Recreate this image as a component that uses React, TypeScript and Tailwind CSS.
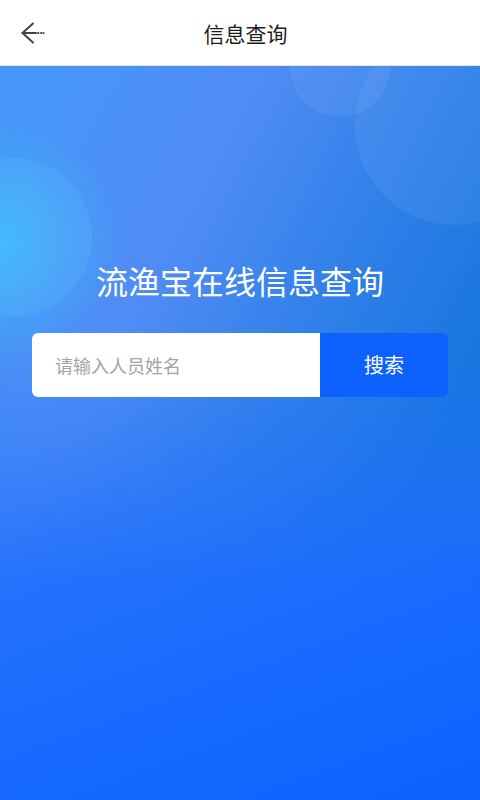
export default function App() {
  return (
    <div className="flex min-h-screen w-full flex-col font-['Noto_Sans_CJK_SC','Noto_Sans',sans-serif]">
      <header className="relative flex h-[66px] shrink-0 items-center justify-center border-b border-[#e6e6e6] bg-white">
        <button className="absolute left-[18px] top-[19px] flex h-[28px] w-[28px] items-center justify-center">
          <svg width="28" height="28" viewBox="0 0 28 28" fill="none" stroke="#444" strokeWidth="2" strokeLinecap="round" strokeLinejoin="round">
            <path d="M15 4.5 4.5 14 15 23.5" />
            <path d="M4.5 14H18" />
            <path d="M20 14h0.5M23 14h0.5M25.5 14h0.2" strokeWidth="1.8" />
          </svg>
        </button>
        <h1 className="ml-[11px] mt-[2px] text-[21px] leading-none text-[#1c1c1c]">信息查询</h1>
      </header>

      <main className="relative flex flex-1 flex-col items-center overflow-hidden bg-[linear-gradient(160deg,#3a84fa_0%,#2b76fc_45%,#0b62ff_100%)] pt-[194px]">
        <div className="pointer-events-none absolute inset-x-0 top-0 h-[520px] bg-[radial-gradient(circle_120px_at_0px_175px,#3ab6fd_0%,rgba(58,182,253,0)_100%),linear-gradient(118deg,#4598f8_0%,#508cf5_35%,#3080e9_60%,#1775df_85%)] [mask-image:linear-gradient(to_bottom,#000_55%,transparent_100%)]" />
        <div className="pointer-events-none absolute left-[290px] top-[-49px] h-[100px] w-[100px] rounded-full bg-white/[0.06]" />
        <div className="pointer-events-none absolute left-[355px] top-[-41px] h-[200px] w-[200px] rounded-full bg-white/[0.06]" />
        <div className="pointer-events-none absolute left-[-66px] top-[92px] h-[158px] w-[158px] rounded-full bg-white/[0.05]" />

        <h2 className="relative text-[32px] leading-[40px] text-white">流渔宝在线信息查询</h2>

        <div className="relative mt-[33px] flex h-[64px] w-[416px] overflow-hidden rounded-[6px]">
          <input
            type="text"
            placeholder="请输入人员姓名"
            className="h-full w-[288px] bg-white pl-[23px] text-[18px] text-[#333] outline-none placeholder:text-[#a3a3a3]"
          />
          <button className="flex flex-1 items-center justify-center bg-[#0d62ff] text-[20px] text-white">搜索</button>
        </div>
      </main>
    </div>
  )
}
